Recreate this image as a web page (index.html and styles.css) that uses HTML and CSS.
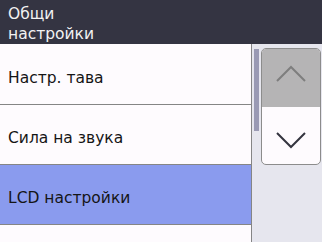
FILE: index.html
```html
<!DOCTYPE html>
<html lang="bg">

<head>
  <meta charset="UTF-8">
  <meta name="viewport" content="width=device-width, initial-scale=1.0">
  <link rel="stylesheet" href="styles.css">
  <title>Общи настройки</title>
</head>

<body>
  <div class="screen">
    <div class="header">Общи<br>настройки</div>
    <div class="main">
      <ul class="menu">
        <li class="item">Настр. тава</li>
        <li class="item">Сила на звука</li>
        <li class="item active">LCD настройки</li>
        <li class="item"></li>
      </ul>
      <div class="scroll">
        <div class="thumb"></div>
        <div class="buttons">
          <div class="btn btnUp">
            <svg width="30" height="17" viewBox="0 0 30 17">
              <polyline points="1,16 15,2 29,16" fill="none" stroke="#7e7e7e" stroke-width="2" />
            </svg>
          </div>
          <div class="btn btnDown">
            <svg width="30" height="17" viewBox="0 0 30 17">
              <polyline points="1,1 15,15 29,1" fill="none" stroke="#34343f" stroke-width="2" />
            </svg>
          </div>
        </div>
      </div>
    </div>
  </div>
</body>

</html>
```

FILE: styles.css
```css
body {
  margin: 0;
  font-family: "DejaVu Sans", "Noto Sans", sans-serif;
}

.screen {
  width: 322px;
  height: 242px;
  display: flex;
  flex-direction: column;
  overflow: hidden;
  background-color: #fefbfe;
}

.header {
  height: 45px;
  box-sizing: border-box;
  padding: 4px 0 0 8px;
  background-color: #343442;
  color: #f2f2f2;
  font-size: 15.5px;
  line-height: 20px;
}

.main {
  flex: 1;
  display: flex;
}

.menu {
  list-style: none;
  margin: 0;
  padding: 1px 0 0 0;
  width: 252px;
  box-sizing: border-box;
  border-right: 1px solid #858585;
}

.item {
  height: 60px;
  box-sizing: border-box;
  border-bottom: 1px solid #858585;
  display: flex;
  align-items: center;
  padding: 7px 0 0 8px;
  font-size: 15.5px;
  color: #151515;
}

.item.active {
  background-color: #8a9bee;
}

.scroll {
  flex: 1;
  display: flex;
  align-items: flex-start;
  gap: 2px;
  padding: 4px 0 0 2px;
  background-color: #e6e6ee;
}

.thumb {
  width: 5px;
  height: 82px;
  margin-top: 1px;
  background-color: #9a9ab4;
}

.buttons {
  width: 58px;
  border: 1px solid #8c8c8c;
  border-radius: 5px;
  overflow: hidden;
  background-color: #fefbfe;
}

.btn {
  display: flex;
  align-items: flex-start;
  justify-content: center;
  box-sizing: border-box;
}

.btnUp {
  height: 58px;
  padding-top: 16px;
  background-color: #b5b4b5;
}

.btnDown {
  height: 57px;
  padding-top: 25px;
}
```
